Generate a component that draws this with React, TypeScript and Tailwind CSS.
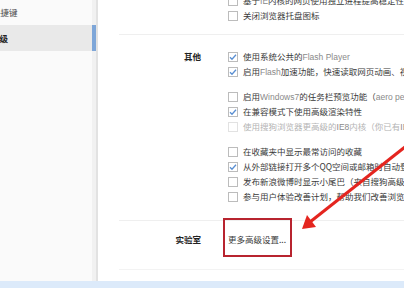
import React from 'react'

type Option = {
    text: React.ReactNode
    checked?: boolean
    disabled?: boolean
}

const Latin = ({ children }: { children: React.ReactNode }) => (
    <span className="font-['Liberation_Sans',sans-serif] text-[#8a8a8a]">{children}</span>
)

const generalGroup: Option[] = [
    { text: <>基于<Latin>IE</Latin>内核的网页使用独立进程提高稳定性</> },
    { text: '关闭浏览器托盘图标' },
]

const otherGroups: Option[][] = [
    [
        { text: <>使用系统公共的<Latin>Flash Player</Latin></>, checked: true },
        { text: <>启用<Latin>Flash</Latin>加速功能，快速读取网页动画、视频</>, checked: true },
    ],
    [
        { text: <>启用<Latin>Windows7</Latin>的任务栏预览功能（<Latin>aero peek</Latin>）</> },
        { text: '在兼容模式下使用高级渲染特性', checked: true },
        { text: <>使用搜狗浏览器更高级的<Latin>IE8</Latin>内核（你已有<Latin>IE8</Latin>）</>, disabled: true },
    ],
    [
        { text: '在收藏夹中显示最常访问的收藏' },
        { text: '从外部链接打开多个QQ空间或邮箱时自动登录', checked: true },
        { text: '发布新浪微博时显示小尾巴（来自搜狗高级浏览器）' },
        { text: '参与用户体验改善计划，帮助我们改善浏览器' },
    ],
]

const CheckRow = ({ text, checked, disabled }: Option) => (
    <div className="flex items-center h-[15px] whitespace-nowrap">
        <span
            className={`w-[10px] h-[10px] shrink-0 border bg-white flex items-center justify-center ${
                disabled ? 'border-[#e2e2e2]' : 'border-[#bcbcbc]'
            }`}
        >
            {checked && (
                <svg width="8" height="8" viewBox="0 0 8 8">
                    <path d="M1 4.2 L3 6.2 L7 1.8" fill="none" stroke="#5a8fd2" strokeWidth="1.3" />
                </svg>
            )}
        </span>
        <span className={`ml-[5px] ${disabled ? 'text-[#b4b4b4]' : 'text-[#3a3a3a]'}`}>{text}</span>
    </div>
)

const Label = ({ children }: { children: React.ReactNode }) => (
    <div className="w-[82px] shrink-0 h-[15px] flex items-center justify-end font-bold text-[#222]">
        {children}
    </div>
)

export default function App() {
    return (
        <div className="w-[404px] h-[297px] overflow-hidden relative bg-white text-[8.5px] leading-none font-['Noto_Sans_CJK_SC',sans-serif]">
            <div className="flex h-[281px]">
                {/* left menu */}
                <div className="w-[92px] shrink-0 bg-[#fafafa] overflow-hidden">
                    <div className="h-[25px] flex items-center text-[#444] whitespace-nowrap">
                        <span className="-ml-[8px]">快捷键</span>
                    </div>
                    <div className="h-[26px] flex items-center bg-[#e9e9e9] font-bold text-[#222] whitespace-nowrap">
                        <span className="-ml-[9px]">高级</span>
                    </div>
                </div>
                <div className="w-[4px] shrink-0 bg-[#f1f1f1] flex flex-col">
                    <div className="h-[25px]" />
                    <div className="h-[26px] bg-[#7ea6d8]" />
                </div>
                <div className="w-[2px] shrink-0 bg-[#e2e2e2]" />

                {/* settings */}
                <div className="flex-1 min-w-0 overflow-hidden pl-[21px]">
                    <div className="-mt-[4px] pb-[11px] border-b border-[#efefef] flex">
                        <div className="w-[82px] shrink-0" />
                        <div className="pl-[27px]">
                            <div className="-mt-[3px]">
                                <CheckRow {...generalGroup[0]} />
                            </div>
                            <CheckRow {...generalGroup[1]} />
                        </div>
                    </div>

                    <div className="pt-[14px] pb-[16px] border-b border-[#efefef] flex">
                        <Label>其他</Label>
                        <div className="pl-[27px] flex flex-col gap-[10px]">
                            {otherGroups.map((group, gi) => (
                                <div key={gi}>
                                    {group.map((o, i) => (
                                        <CheckRow key={i} {...o} />
                                    ))}
                                </div>
                            ))}
                        </div>
                    </div>

                    <div className="pt-[11px] pb-[9px] border-b border-[#f3f3f3] flex items-start">
                        <Label>实验室</Label>
                        <div className="w-[210px] shrink-0 pl-[27px] h-[15px] flex items-center text-[#3a3a3a] whitespace-nowrap">
                            更多高级设置...
                        </div>
                        <div className="mt-[4px] h-[24px] w-[40px] shrink-0 border border-[#cfcfcf] rounded-[2px] bg-[#fbfbfb]" />
                    </div>
                </div>
            </div>
            <div className="h-[7px] bg-[#dceafa]" />

            {/* annotation overlay */}
            <div className="absolute left-[223px] top-[218px] w-[69px] h-[39px] border-2 border-[#b8242f]" />
            <svg className="absolute left-0 top-0 pointer-events-none" width="404" height="297">
                <line x1="410" y1="143" x2="310" y2="222" stroke="#e4251f" strokeWidth="3" />
                <polygon points="302,229 316,227 307,215" fill="#e4251f" />
            </svg>
        </div>
    )
}
